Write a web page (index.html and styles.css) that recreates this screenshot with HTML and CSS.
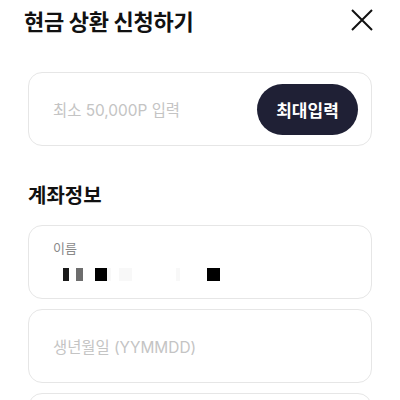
FILE: index.html
```html
<!DOCTYPE html>
<html lang="ko">
<head>
  <meta charset="utf-8">
  <title>현금 상환 신청하기</title>
  <link rel="stylesheet" href="styles.css">
</head>
<body>
  <div class="sheet">
    <div class="header">
      <h1>현금 상환 신청하기</h1>
      <button class="close" aria-label="닫기">
        <svg width="22" height="22" viewBox="0 0 22 22">
          <path d="M1 1 L21 21 M21 1 L1 21" stroke="#111" stroke-width="2" fill="none"/>
        </svg>
      </button>
    </div>

    <!-- 금액 입력 -->
    <div class="field amount">
      <span class="placeholder">최소 50,000P 입력</span>
      <button class="max-btn">최대입력</button>
    </div>

    <h2>계좌정보</h2>

    <div class="field labeled">
      <span class="label">이름</span>
      <div class="masked">
        <i class="px dark" style="width:6px"></i>
        <i class="px gray" style="width:7px;margin-left:7px"></i>
        <i class="px black" style="width:12px;margin-left:12px"></i>
        <i class="px faint" style="width:4px"></i>
        <i class="px faint" style="width:13px;margin-left:8px"></i>
        <i class="px faint" style="width:4px;margin-left:44px"></i>
        <i class="px black" style="width:13px;margin-left:27px"></i>
      </div>
    </div>

    <div class="field">
      <span class="placeholder">생년월일 (YYMMDD)</span>
    </div>

    <div class="field"></div>
  </div>
</body>
</html>
```

FILE: styles.css
```css
body {
  margin: 0;
  font-family: Inter, "Noto Sans CJK KR", sans-serif;
  background: #fff;
  color: #111;
}
.sheet {
  padding: 0 28px;
}
.header {
  display: flex;
  justify-content: space-between;
  align-items: center;
  height: 40px;
  margin-left: -4px;
}
h1 {
  margin: 0;
  font-size: 22px;
  font-weight: 700;
  letter-spacing: -0.3px;
}
.close {
  border: none;
  background: none;
  padding: 0;
  margin-right: -1px;
  display: flex;
}
.field {
  box-sizing: border-box;
  height: 74px;
  border: 1px solid #e6e6e6;
  border-radius: 14px;
  display: flex;
  align-items: center;
  padding: 0 13px 0 24px;
  margin-bottom: 10px;
}
.amount {
  margin-top: 32px;
  justify-content: space-between;
}
.placeholder {
  font-size: 15.4px;
  color: #c4c4c4;
}
.max-btn {
  width: 101px;
  height: 51px;
  border: none;
  border-radius: 26px;
  background: #1f2035;
  color: #fff;
  font-family: inherit;
  font-size: 17px;
  font-weight: 700;
}
h2 {
  margin: 37px 0 16px;
  font-size: 20px;
  font-weight: 700;
  line-height: 26px;
}
.labeled {
  flex-direction: column;
  align-items: flex-start;
  justify-content: flex-start;
  padding-top: 14px;
}
.label {
  font-size: 13px;
  line-height: 16px;
  color: #8a8a8a;
}
.masked {
  display: flex;
  margin: 12px 0 0 10px;
  height: 13px;
}
.px {
  display: block;
  height: 13px;
}
.dark { background: #1a1a1a; }
.gray { background: #6d6d6d; }
.black { background: #000; }
.faint { background: #f8f8f8; }
```
